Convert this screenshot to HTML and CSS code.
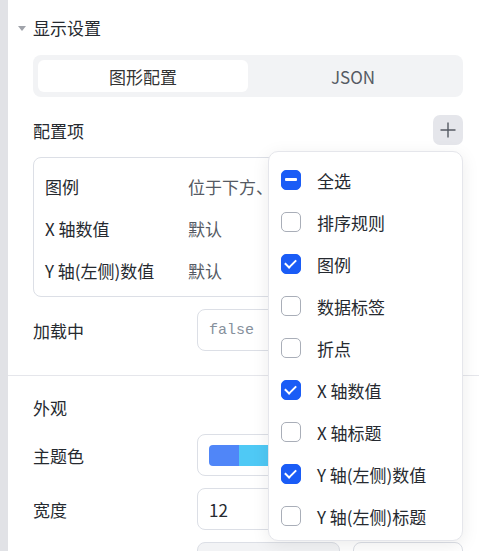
FILE: index.html
```html
<!DOCTYPE html>
<html lang="zh-CN">
<head>
    <meta charset="UTF-8">
    <meta name="viewport" content="width=device-width, initial-scale=1.0">
    <title>显示设置</title>
    <link rel="stylesheet" href="styles.css">
</head>
<body>
    <div class="page">
        <div class="rail"></div>
        <div class="panel">
            <div class="section">
                <div class="head"><span class="caret"></span>显示设置</div>
                <div class="segment">
                    <div class="tab active">图形配置</div>
                    <div class="tab">JSON</div>
                </div>
                <div class="bar">
                    <span>配置项</span>
                    <span class="plus">
                        <svg width="18" height="18" viewBox="0 0 18 18"><path d="M9 1.5v15M1.5 9h15" stroke="#555a63" stroke-width="1.4" fill="none"/></svg>
                    </span>
                </div>
                <div class="card">
                    <div class="crow"><span class="ck">图例</span><span class="cv">位于下方、水平排列</span></div>
                    <div class="crow"><span class="ck">X 轴数值</span><span class="cv">默认</span></div>
                    <div class="crow"><span class="ck">Y 轴(左侧)数值</span><span class="cv">默认</span></div>
                </div>
                <div class="field">
                    <span class="label">加载中</span>
                    <div class="input mono">false</div>
                </div>
            </div>
            <div class="section second">
                <div class="sub">外观</div>
                <div class="field">
                    <span class="label">主题色</span>
                    <div class="input">
                        <span class="sw" style="background:#5086f8"></span><span class="sw" style="background:#4fc9f5"></span><span class="sw" style="background:#f7b84b"></span>
                    </div>
                </div>
                <div class="field">
                    <span class="label">宽度</span>
                    <div class="input dark">12</div>
                </div>
                <div class="field">
                    <span class="label"></span>
                    <div class="btns">
                        <div class="btn gray"></div>
                        <div class="btn"></div>
                    </div>
                </div>
            </div>
        </div>
    </div>

    <div class="menu">
        <div class="item"><span class="box part"></span>全选</div>
        <div class="item"><span class="box"></span>排序规则</div>
        <div class="item"><span class="box on"></span>图例</div>
        <div class="item"><span class="box"></span>数据标签</div>
        <div class="item"><span class="box"></span>折点</div>
        <div class="item"><span class="box on"></span>X 轴数值</div>
        <div class="item"><span class="box"></span>X 轴标题</div>
        <div class="item"><span class="box on"></span>Y 轴(左侧)数值</div>
        <div class="item"><span class="box"></span>Y 轴(左侧)标题</div>
    </div>
</body>
</html>
```

FILE: styles.css
```css
* {
    margin: 0;
    padding: 0;
    box-sizing: border-box;
}

body {
    font-family: "Noto Sans CJK SC", "Noto Sans", sans-serif;
    font-size: 17px;
    color: #262a30;
    background: #fff;
    overflow: hidden;
    height: 551px;
}

.page {
    display: flex;
    height: 551px;
    overflow: hidden;
}

.rail {
    width: 8px;
    background: #e1e2e6;
}

.panel {
    flex: 1;
}

.section {
    padding: 16px 16px 24px 25px;
}

.second {
    border-top: 1px solid #e5e6eb;
    padding-top: 20px;
}

.head {
    position: relative;
    line-height: 24px;
}

.caret {
    position: absolute;
    left: -15px;
    top: 10px;
    border-left: 4px solid transparent;
    border-right: 4px solid transparent;
    border-top: 5px solid #a0a3aa;
}

.segment {
    display: grid;
    grid-template-columns: 1fr 1fr;
    margin-top: 15px;
    height: 42px;
    padding: 5px;
    background: #f2f3f5;
    border-radius: 8px;
}

.tab {
    display: flex;
    align-items: center;
    justify-content: center;
    color: #555a63;
    border-radius: 6px;
}

.tab.active {
    background: #fff;
    color: #333;
}

.bar {
    display: flex;
    justify-content: space-between;
    align-items: center;
    margin-top: 18px;
    height: 30px;
}

.plus {
    width: 30px;
    height: 30px;
    background: #e5e6eb;
    border-radius: 7px;
    display: flex;
    align-items: center;
    justify-content: center;
}

.card {
    margin-top: 12px;
    border: 1px solid #dcdfe6;
    border-radius: 8px;
    padding: 7px 11px 5px;
}

.crow {
    display: flex;
    height: 42px;
    align-items: center;
    white-space: nowrap;
}

.ck {
    width: 143px;
    flex: none;
}

.cv {
    color: #555a63;
    width: 78px;
    overflow: hidden;
}

.field {
    display: flex;
    align-items: center;
    margin-top: 12px;
}

.label {
    width: 164px;
    flex: none;
}

.input {
    flex: 1;
    height: 42px;
    border: 1px solid #dcdfe6;
    border-radius: 8px;
    display: flex;
    align-items: center;
    padding: 0 11px;
    color: #86909c;
}

.input.dark {
    color: #262a30;
}

.mono {
    font-family: "Liberation Mono", monospace;
    font-size: 15px;
}

.sub {
    line-height: 24px;
    margin-bottom: 14px;
}

.second .field:first-of-type {
    margin-top: 0;
}

.sw {
    width: 30px;
    height: 21px;
}

.sw:first-child {
    border-radius: 4px 0 0 4px;
}

.btns {
    flex: 1;
    display: flex;
    gap: 13px;
}

.btn {
    flex: 1;
    height: 42px;
    border: 1px solid #dcdfe6;
    border-radius: 8px;
}

.btn.gray {
    flex: 1.3;
    background: #f2f3f5;
}

.menu {
    position: absolute;
    left: 268px;
    top: 151px;
    width: 195px;
    height: 390px;
    background: #fff;
    border: 1px solid #e5e6eb;
    border-radius: 10px;
    box-shadow: 0 4px 18px rgba(0, 0, 0, 0.08);
    padding: 7px 0 2px 12px;
}

.item {
    display: flex;
    align-items: center;
    height: 42px;
    gap: 16px;
    white-space: nowrap;
    color: #262a30;
}

.box {
    width: 20px;
    height: 20px;
    border: 1.5px solid #a9aeb8;
    border-radius: 5px;
    flex: none;
    position: relative;
}

.box.on,
.box.part {
    background: #1a5cf6;
    border-color: #1a5cf6;
}

.box.part::after {
    content: "";
    position: absolute;
    left: 3px;
    right: 3px;
    top: 7px;
    height: 3px;
    background: #fff;
    border-radius: 1px;
}

.box.on::after {
    content: "";
    position: absolute;
    left: 5px;
    top: 2px;
    width: 5px;
    height: 9px;
    border: solid #fff;
    border-width: 0 2.5px 2.5px 0;
    transform: rotate(45deg);
}
```
